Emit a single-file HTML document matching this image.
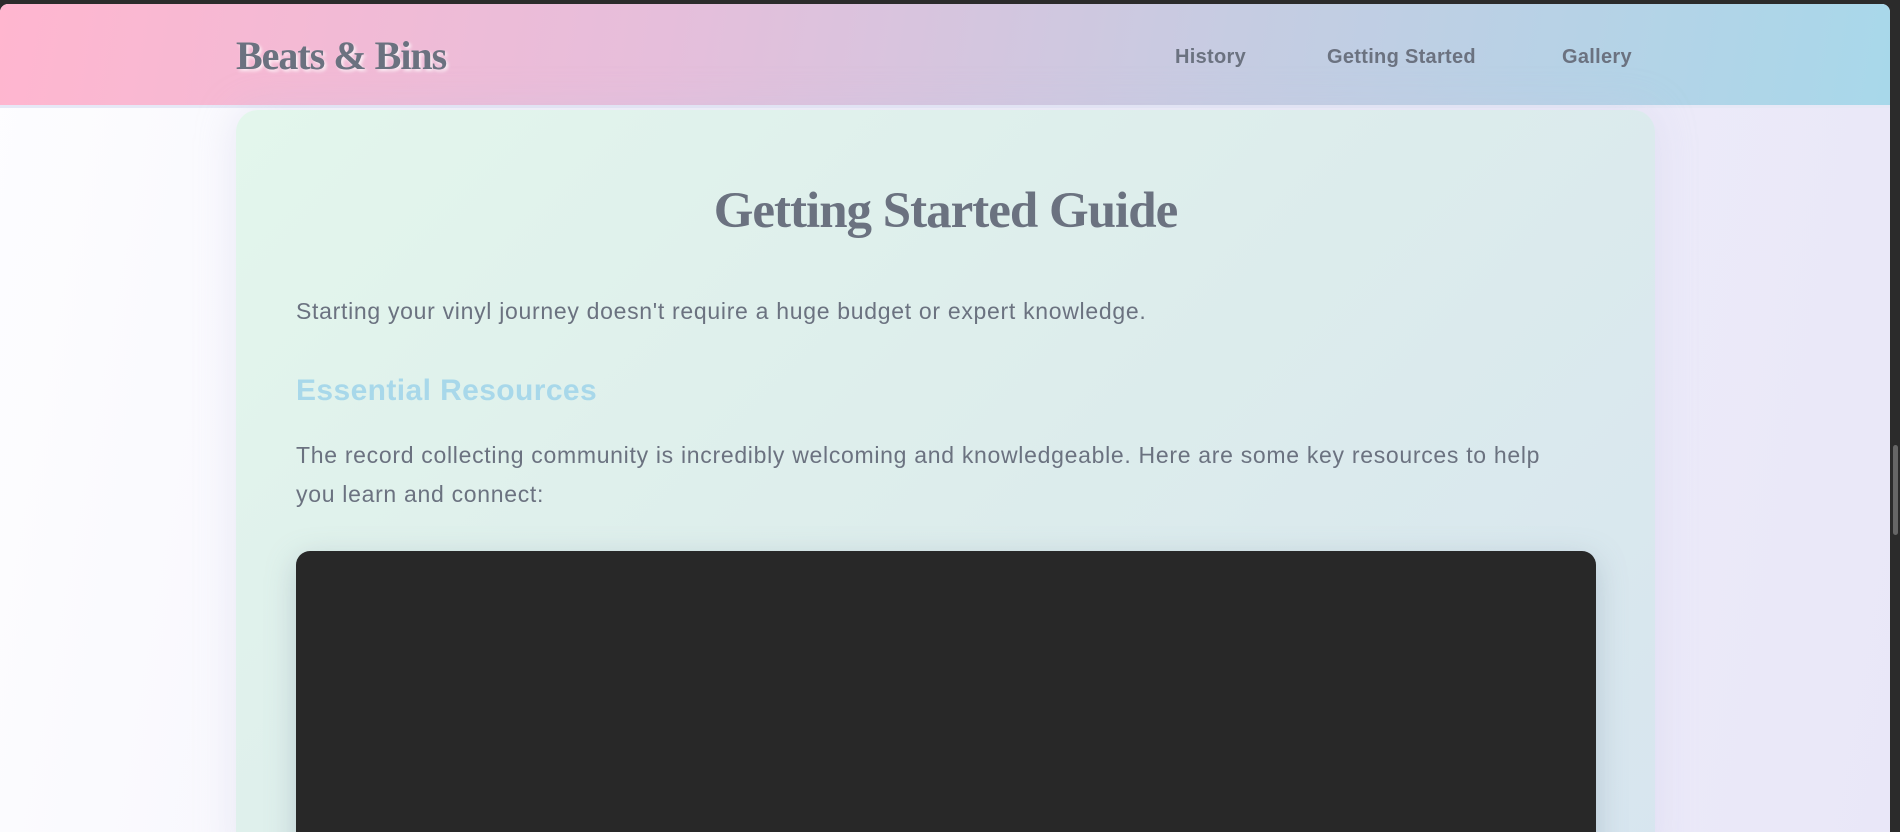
<!DOCTYPE html>
<html><head><meta charset="utf-8"><style>
*{margin:0;padding:0;box-sizing:border-box}
html,body{width:1900px;height:832px;overflow:hidden;background:#2b2b2b;font-family:"Liberation Sans",sans-serif}
.win{position:absolute;left:0;top:4px;width:1890px;height:828px;border-radius:8px 8px 0 0;overflow:hidden;background:linear-gradient(100deg,#fdfdff 0%,#f3f2fb 40%,#e9e7f8 100%)}
.sb{position:absolute;right:0;top:0;width:10px;height:832px;background:#2b2b2b}
.sb i{position:absolute;left:3px;top:445px;width:5px;height:90px;background:#666;border-radius:3px}
header{position:absolute;left:0;top:0;width:100%;height:104px;background:linear-gradient(100deg,#ffb6cf 0%,#e6bedb 35%,#c6cce2 65%,#a8d8ea 100%);border-bottom:3px solid #e6e8f6}
.logo{position:absolute;left:236px;top:28px;font:bold 40px "Liberation Serif",serif;color:#6b7280;letter-spacing:-1px;text-shadow:2px 2px 3px rgba(255,255,255,.8)}
nav a{position:absolute;top:42px;font-weight:600;font-size:20px;color:#6b7280;text-decoration:none;letter-spacing:.3px}
.card{position:absolute;left:236px;top:106px;width:1419px;height:760px;border-radius:22px;background:linear-gradient(135deg,#e3f6ec 0%,#ddedec 50%,#d7e5ef 100%);box-shadow:0 0 40px rgba(200,200,230,.35)}
h1{position:absolute;left:0;width:100%;top:72px;text-align:center;font:bold 51px "Liberation Serif",serif;color:#6b7280;letter-spacing:-1px}
p{position:absolute;left:60px;width:1300px;font-size:23px;letter-spacing:.7px;color:#6b7280;line-height:39px}
h2{position:absolute;left:60px;top:264px;font-size:30px;letter-spacing:.4px;font-weight:600;color:#a8d8ea}
.box{position:absolute;left:60px;top:441px;width:1300px;height:400px;background:#282828;border-radius:14px;box-shadow:0 8px 30px rgba(120,140,160,.35)}
</style></head><body>
<div class="win">
<header><div class="logo">Beats &amp; Bins</div>
<nav><a style="left:1175px">History</a><a style="left:1327px">Getting Started</a><a style="left:1562px">Gallery</a></nav></header>
<div class="card">
<h1>Getting Started Guide</h1>
<p style="top:182px">Starting your vinyl journey doesn't require a huge budget or expert knowledge.</p>
<h2>Essential Resources</h2>
<p style="top:326px;width:1270px">The record collecting community is incredibly welcoming and knowledgeable. Here are some key resources to help you learn and connect:</p>
<div class="box"></div>
</div>
</div>
<div class="sb"><i></i></div>
</body></html>
